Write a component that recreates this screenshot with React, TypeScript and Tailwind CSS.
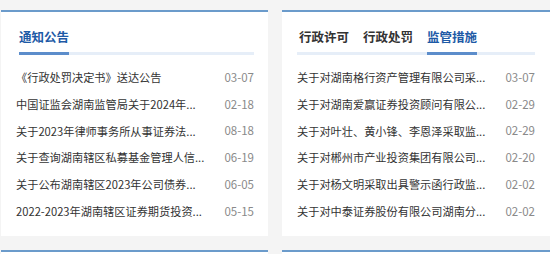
import React from "react";

const left = [
  ["《行政处罚决定书》送达公告", "03-07"],
  ["中国证监会湖南监管局关于2024年...", "02-18"],
  ["关于2023年律师事务所从事证券法...", "08-18"],
  ["关于查询湖南辖区私募基金管理人信...", "06-19"],
  ["关于公布湖南辖区2023年公司债券...", "06-05"],
  ["2022-2023年湖南辖区证券期货投资...", "05-15"],
];

const right = [
  ["关于对湖南格行资产管理有限公司采...", "03-07"],
  ["关于对湖南爱赢证券投资顾问有限公...", "02-29"],
  ["关于对叶壮、黄小锋、李恩泽采取监...", "02-29"],
  ["关于对郴州市产业投资集团有限公司...", "02-20"],
  ["关于对杨文明采取出具警示函行政监...", "02-02"],
  ["关于对中泰证券股份有限公司湖南分...", "02-02"],
];

function List({ items }: { items: string[][] }) {
  return (
    <div className="flex flex-col pt-[9px]">
      {items.map(([t, d], i) => (
        <div key={i} className="flex h-[26.8px] items-center justify-between">
          <span className="text-[11.2px] text-[#333]">{t}</span>
          <span className="text-[11.5px] text-[#8a8a8a]">{d}</span>
        </div>
      ))}
    </div>
  );
}

export default function App() {
  return (
    <div
      className="w-[550px] h-[254px] overflow-hidden bg-[#f4f4f4]"
      style={{ fontFamily: '"Noto Sans CJK SC", "Noto Sans", sans-serif' }}
    >
      <div className="flex gap-[14px] pt-[10px] pl-[1px]">
        <div className="w-[267px] h-[226px] bg-white border-t-2 border-[#6b9bcb] pl-[15px] pr-[14px]">
          <div className="pl-[3px] pt-[15px] h-[40px] text-[12.5px] font-semibold text-[#1e5aa6] leading-[20px]">
            通知公告
          </div>
          <div className="ml-[3px] flex h-[3px]">
            <div className="w-[50px] bg-[#5c8dcb]" />
            <div className="flex-1 bg-[#e6eef8]" />
          </div>
          <List items={left} />
        </div>
        <div className="w-[268px] h-[226px] bg-white border-t-2 border-[#6b9bcb] pl-[15px] pr-[15px]">
          <div className="pl-[2px] pt-[15px] h-[40px] flex gap-[14px] text-[12.5px] font-semibold leading-[20px]">
            <span className="text-[#333]">行政许可</span>
            <span className="text-[#333]">行政处罚</span>
            <span className="text-[#1e5aa6]">监管措施</span>
          </div>
          <div className="flex h-[3px] bg-[#e6eef8]">
            <div className="ml-[130px] w-[50px] bg-[#5c8dcb]" />
          </div>
          <List items={right} />
        </div>
      </div>
      <div className="flex gap-[14px] pt-[14px] pl-[1px]">
        <div className="w-[267px] h-[20px] bg-white border-t-2 border-[#6b9bcb]" />
        <div className="w-[268px] h-[20px] bg-white border-t-2 border-[#6b9bcb]" />
      </div>
    </div>
  );
}
